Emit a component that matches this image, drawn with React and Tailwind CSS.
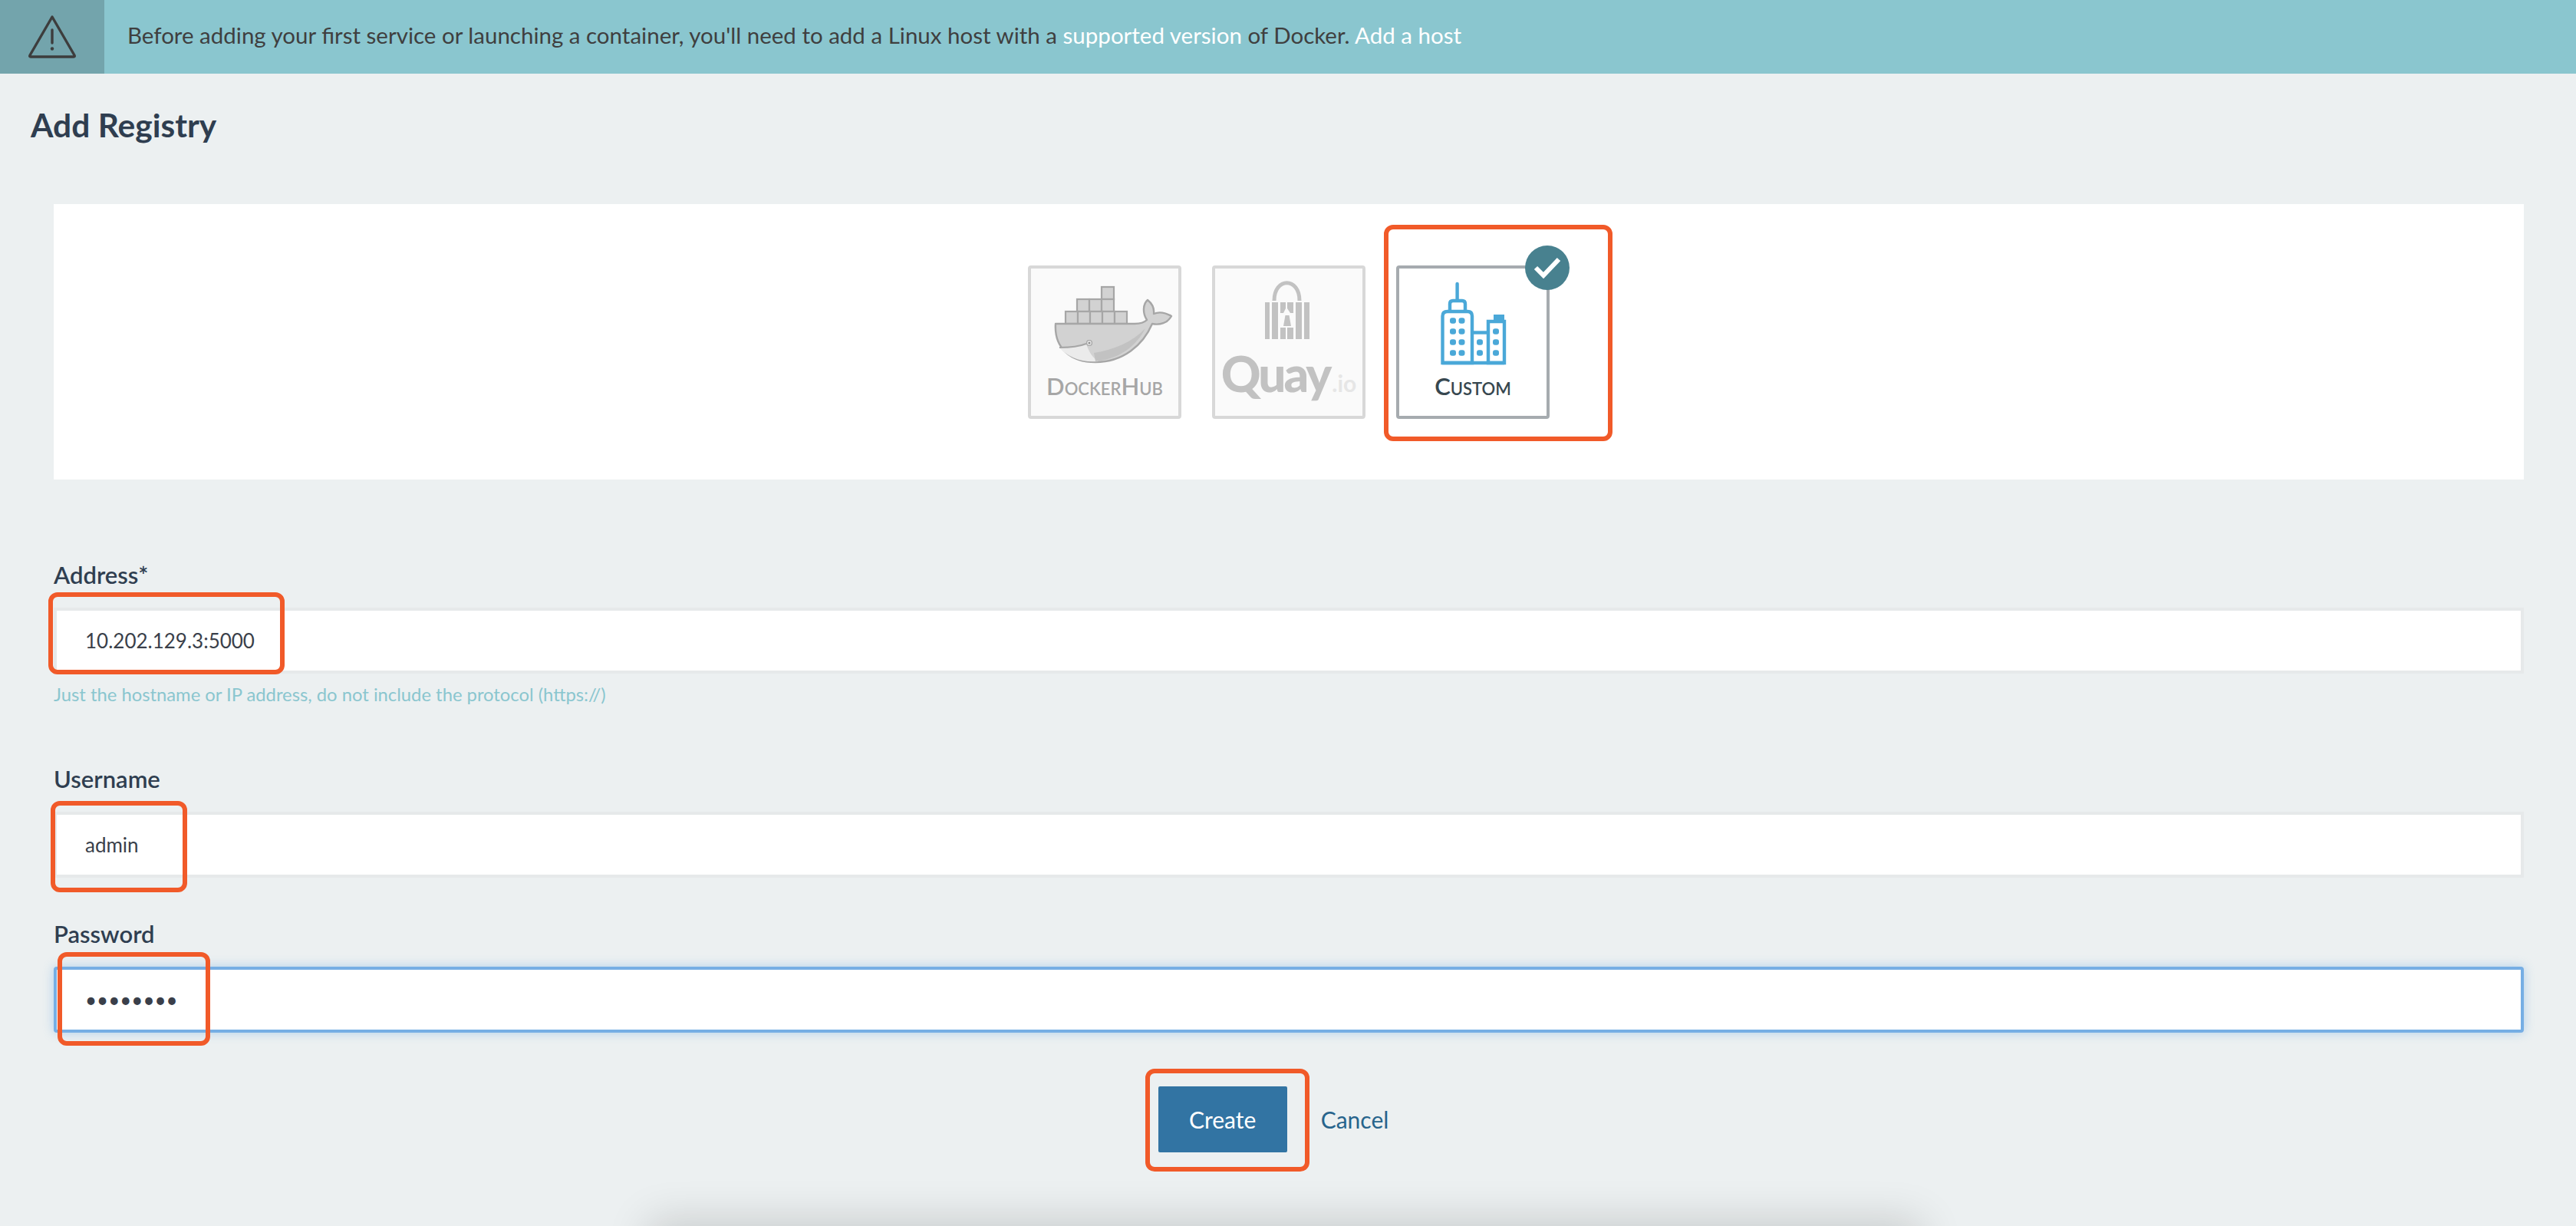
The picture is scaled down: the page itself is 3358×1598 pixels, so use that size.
import React from 'react';

const inputBase = "block w-full h-[86px] mt-[25px] border-4 bg-white pl-[37px] text-[26px] text-[#3a3f4a] outline-none";

const Field = ({ label, type = "text", value, focused, className }) => (
    <div className={className}>
        <label className="block text-[31px] leading-[36px] font-semibold text-[#2f3e50]">{label}</label>
        <input
            type={type}
            readOnly
            defaultValue={value}
            className={focused
                ? inputBase + " rounded-[4px] border-[#76aee4] shadow-[0_0_14px_rgba(102,166,226,0.45)]"
                : inputBase + " border-[#e6e9ea]"}
        />
    </div>
);

const WarningIcon = () => (
    <svg width="64" height="58" viewBox="0 0 64 58" fill="none" stroke="#3d3d3d" strokeWidth="3.4" strokeLinejoin="round">
        <path d="M32 3 L61 53 Q62 55 60 55 L4 55 Q2 55 3 53 Z" />
        <path d="M32 20 L32 37" strokeWidth="3.4" strokeLinecap="round" />
        <circle cx="32" cy="44.5" r="2.2" fill="#3d3d3d" stroke="none" />
    </svg>
);

const DockerLogo = () => {
    const boxes = [
        [96, 28], [64, 44], [80, 44], [96, 44],
        [49, 60], [65, 60], [81, 60], [97, 60], [113, 60],
    ];
    return (
        <svg width="192" height="140" viewBox="4 4 192 140" className="block">
            {boxes.map((b, i) => (
                <rect key={i} x={b[0]} y={b[1]} width="16" height="16" fill="#d2d2d2" stroke="#a6a6a6" strokeWidth="2.2" />
            ))}
            <path
                d="M36 76 L139 76 C147 76 152 74 155 71 C149 62 150 50 156 45 C161 49 165 55 164 63 C171 60 180 62 187 66 C182 75 172 78 162 76 C150 104 124 126 88 126 C56 126 34 108 36 76 Z"
                fill="#d2d2d2"
                stroke="#a6a6a6"
                strokeWidth="2.4"
                strokeLinejoin="round"
            />
            <path d="M40 106 C50 106 66 106 76 102 C79 112 84 120 92 125 C70 127 52 120 40 106 Z" fill="#ebebeb" />
            <path d="M88 125 C120 122 142 104 153 82 C136 100 112 110 86 114 Z" fill="#c2c2c2" />
            <path d="M41 107 C52 107 66 106 76 102" fill="none" stroke="#a6a6a6" strokeWidth="2" />
            <circle cx="80" cy="101" r="3.4" fill="#f4f4f4" stroke="#a6a6a6" strokeWidth="1.4" />
            <circle cx="80" cy="101" r="1.6" fill="#8e8e8e" />
        </svg>
    );
};

const QuayLock = () => (
    <svg width="192" height="96" viewBox="4 4 192 96" className="block">
        <path d="M81 46 C81 15 114 15 114 46" fill="none" stroke="#c2c2c2" strokeWidth="5" />
        <g fill="#c2c2c2">
            <rect x="69" y="48" width="6" height="48" />
            <rect x="78" y="48" width="8" height="48" />
            <path d="M89 48 L96 48 L96 56 L93 62 L89 62 Z" />
            <path d="M98 48 L106 48 L106 62 L102 62 L98 56 Z" />
            <rect x="89" y="81" width="7" height="15" />
            <rect x="98" y="81" width="8" height="15" />
            <path d="M95.5 65 L100.5 65 L103 79 L93 79 Z" />
            <rect x="109" y="48" width="8" height="48" />
            <rect x="120" y="48" width="7" height="48" />
        </g>
    </svg>
);

const CityIcon = () => {
    const dots = [
        [74, 72], [85.5, 72], [74, 86], [85.5, 86], [74, 100], [85.5, 100], [74, 114], [85.5, 114],
        [109, 100], [109, 114], [130, 86], [130, 100], [130, 114],
    ];
    return (
        <svg width="192" height="140" viewBox="4 4 192 140" className="block">
            <g fill="none" stroke="#4aa8d8" strokeWidth="4.4">
                <path d="M60.5 127 L60.5 66 Q60.5 60 67 60 L93 60 Q99 60 99 66 L99 127 Z" />
                <path d="M70 60 L70 50 Q70 46 74 46 L86 46 Q90 46 90 50 L90 60" />
                <path d="M99 87.5 L120 87.5" />
                <path d="M120 127 L120 73 L141 73 L141 127 Z" />
                <path d="M60 127 L141 127" />
            </g>
            <path d="M79.6 44 L79.6 24" stroke="#4aa8d8" strokeWidth="4.4" strokeLinecap="round" />
            <rect x="127" y="64" width="14" height="8" fill="#4aa8d8" />
            {dots.map((d, i) => (
                <rect key={i} x={d[0] - 4} y={d[1] - 3.8} width="8" height="7.6" rx="3" fill="#4aa8d8" />
            ))}
        </svg>
    );
};

const Tile = ({ active, children }) => (
    <div className={active
        ? "relative w-[200px] h-[200px] rounded-[4px] border-4 border-[#a6abaf] bg-white"
        : "relative w-[200px] h-[200px] rounded-[4px] border-4 border-[#d8d8d8] bg-[#fafafa]"}>
        {children}
    </div>
);

const Mark = ({ className }) => (
    <div className={"absolute rounded-[12px] border-[6px] border-[#f15a29] " + className}></div>
);

const App = () => {
    return (
        <div className="relative w-full h-[1598px] overflow-hidden bg-[#ecf0f1] font-['Lato',sans-serif]">
            {/* notice bar */}
            <div className="flex items-center h-[96px] bg-[#8ac6cf]">
                <div className="flex items-center justify-center w-[136px] h-full bg-[#73a4ac]">
                    <WarningIcon />
                </div>
                <p className="ml-[30px] mb-[3px] text-[29.5px] text-[#3f3f3f]">
                    Before adding your first service or launching a container, you'll need to add a Linux host with a{" "}
                    <a className="text-white">supported version</a> of Docker. <a className="text-white">Add a host</a>
                </p>
            </div>

            <h1 className="mt-[40px] ml-[40px] text-[42.5px] leading-[54px] font-bold text-[#2f3e50]">Add Registry</h1>

            <div className="ml-[70px] mr-[68px] mt-[76px]">
                <div className="flex justify-center gap-[40px] h-[359px] pt-[80px] bg-white">
                    <Tile>
                        <DockerLogo />
                        <div className="text-center text-[31px] leading-[36px] mt-[-5px] text-[#a6a6a6] font-semibold [font-variant:small-caps]">DockerHub</div>
                    </Tile>
                    <Tile>
                        <QuayLock />
                        <div className="flex items-baseline justify-center leading-[64px] mt-[9px]">
                            <span className="text-[64px] font-black tracking-[-3px] text-[#c2c2c2]">Quay</span>
                            <span className="ml-[3px] text-[30px] font-bold text-[#e6e6e6]">.io</span>
                        </div>
                    </Tile>
                    <Tile active>
                        <CityIcon />
                        <div className="text-center text-[31px] leading-[36px] mt-[-5px] text-[#37474f] font-semibold [font-variant:small-caps]">Custom</div>
                        <div className="absolute top-[-30px] right-[-30px] flex items-center justify-center w-[58px] h-[58px] rounded-full bg-[#48818f]">
                            <svg width="38" height="32" viewBox="0 0 38 32" fill="none" stroke="#fff" strokeWidth="6">
                                <path d="M4 16 L14 26 L34 5" />
                            </svg>
                        </div>
                    </Tile>
                </div>

                <Field label="Address*" value="10.202.129.3:5000" className="mt-[106px]" />
                <p className="mt-[12px] text-[23.8px] leading-[30px] text-[#8ac6cf]">
                    Just the hostname or IP address, do not include the protocol (https://)
                </p>
                <Field label="Username" value="admin" className="mt-[77px]" />
                <Field label="Password" type="password" value="password" focused className="mt-[55px]" />

                <div className="flex items-center justify-center mt-[70px] pr-[40px]">
                    <button className="w-[168px] h-[86px] rounded-[2px] bg-[#3274a3] text-[30px] text-white">Create</button>
                    <a className="ml-[44px] text-[30px] text-[#27648c]">Cancel</a>
                </div>
            </div>

            {/* annotation boxes drawn on the screenshot */}
            <Mark className="left-[1804px] top-[293px] w-[298px] h-[282px]" />
            <Mark className="left-[63px] top-[772px] w-[308px] h-[107px]" />
            <Mark className="left-[66px] top-[1044px] w-[178px] h-[119px]" />
            <Mark className="left-[75px] top-[1241px] w-[199px] h-[122px]" />
            <Mark className="left-[1493px] top-[1393px] w-[214px] h-[134px]" />

            {/* shadow of something just below the fold */}
            <div className="absolute left-[860px] top-[1606px] w-[1630px] h-[40px] shadow-[0_0_56px_14px_rgba(0,0,0,0.16)]"></div>
        </div>
    );
};

export default App;
